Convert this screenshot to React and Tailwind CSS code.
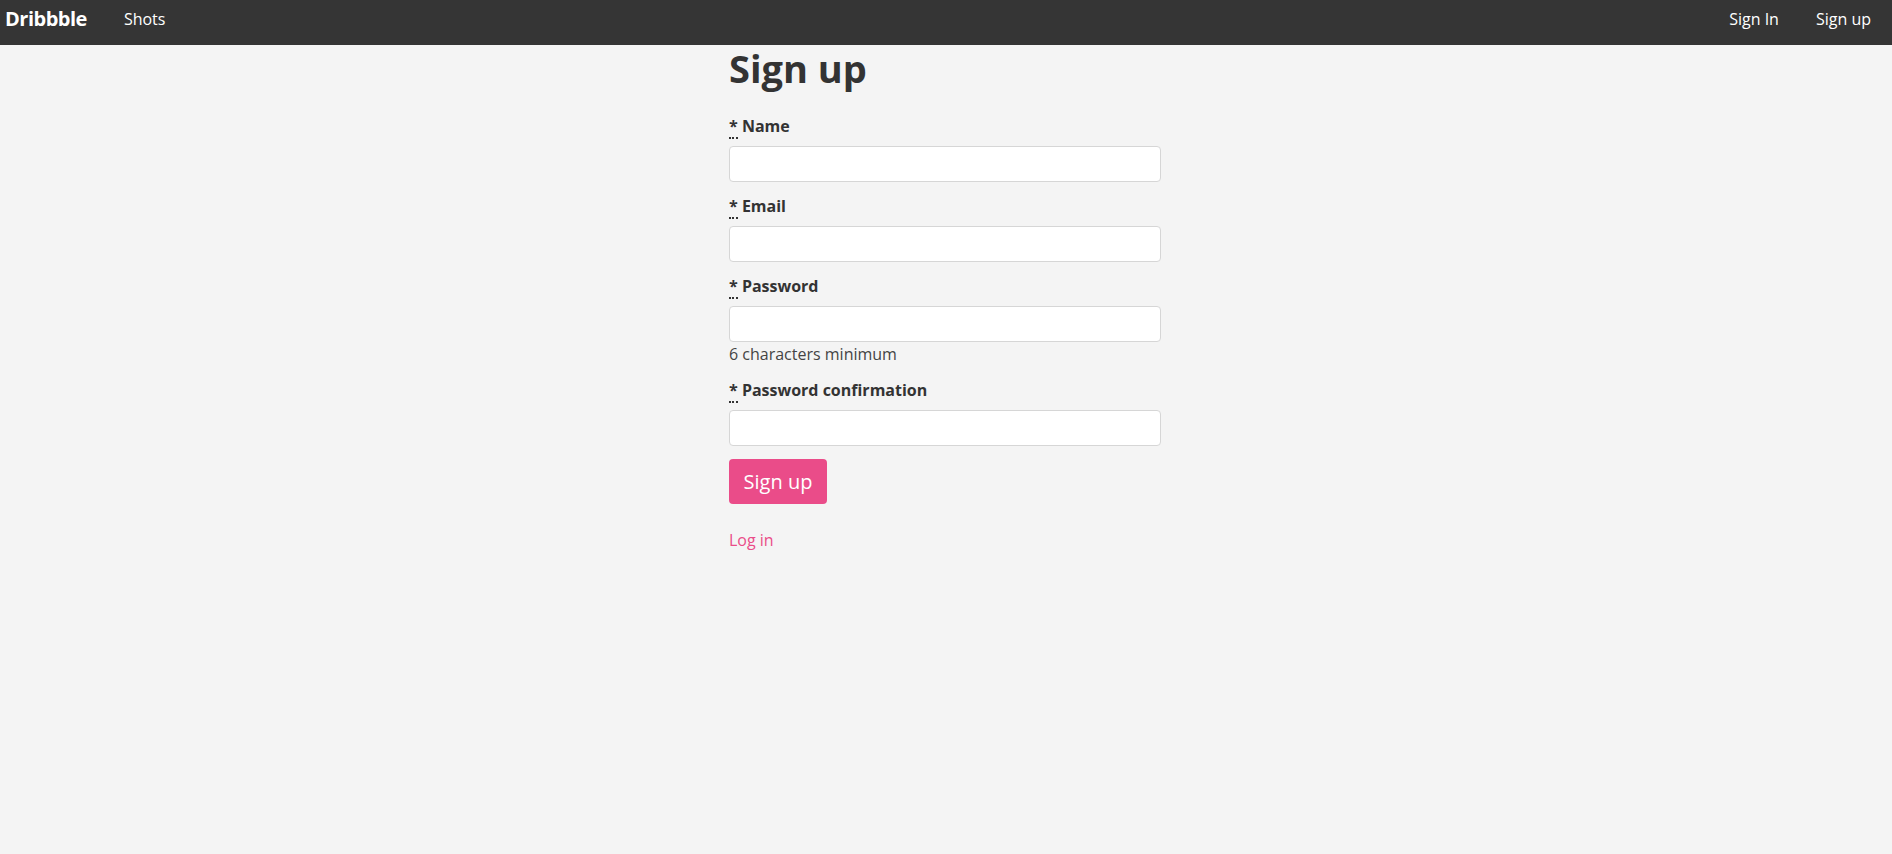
import React from "react";

const FIELDS = [
  { key: "name", label: "Name", type: "text" },
  { key: "email", label: "Email", type: "email" },
  { key: "password", label: "Password", type: "password", hint: "6 characters minimum" },
  { key: "password_confirmation", label: "Password confirmation", type: "password" },
];

function Field({ label, type, hint }) {
  return (
    <div className="mb-[12px]">
      <label className="block font-bold text-[16px] leading-[24px] mb-2">
        <abbr title="required" className="no-underline border-b-2 border-dotted border-[#333] leading-none">
          *
        </abbr>{" "}
        {label}
      </label>
      <input
        type={type}
        className="block w-full h-[36px] rounded-[4px] border border-[#d6d6d6] bg-white px-3 text-[16px] outline-none"
      />
      {hint ? <div className="text-[16px] leading-[24px] text-[#444]">{hint}</div> : null}
    </div>
  );
}

export default function App() {
  return (
    <div
      className="min-h-screen bg-[#f4f4f4] text-[#333]"
      style={{ fontFamily: '"Open Sans", "Liberation Sans", sans-serif' }}
    >
      <nav className="h-[45px] bg-[#353535] flex items-center justify-between pl-[5px] pr-[21px] pb-[7px] text-white">
        <div className="flex items-center">
          <a href="#" className="font-bold text-[20px] tracking-tight">
            Dribbble
          </a>
          <a href="#" className="ml-[37px] text-[16px]">
            Shots
          </a>
        </div>
        <div className="flex items-center gap-[37px] text-[16px]">
          <a href="#">Sign In</a>
          <a href="#">Sign up</a>
        </div>
      </nav>

      <div className="pr-[2px]">
        <div className="w-[432px] mx-auto">
          <h1 className="text-[38px] leading-[46px] font-bold mb-[23px]">Sign up</h1>
          <form onSubmit={(e) => e.preventDefault()}>
            {FIELDS.map((f) => (
              <Field key={f.key} {...f} />
            ))}
            <button
              type="submit"
              className="mt-[1px] h-[45px] w-[98px] rounded-[4px] bg-[#ea4c89] text-white text-[20px]"
            >
              Sign up
            </button>
          </form>
          <div className="mt-[24px]">
            <a href="#" className="text-[#ea4c89] text-[16px] leading-[24px]">
              Log in
            </a>
          </div>
        </div>
      </div>
    </div>
  );
}
